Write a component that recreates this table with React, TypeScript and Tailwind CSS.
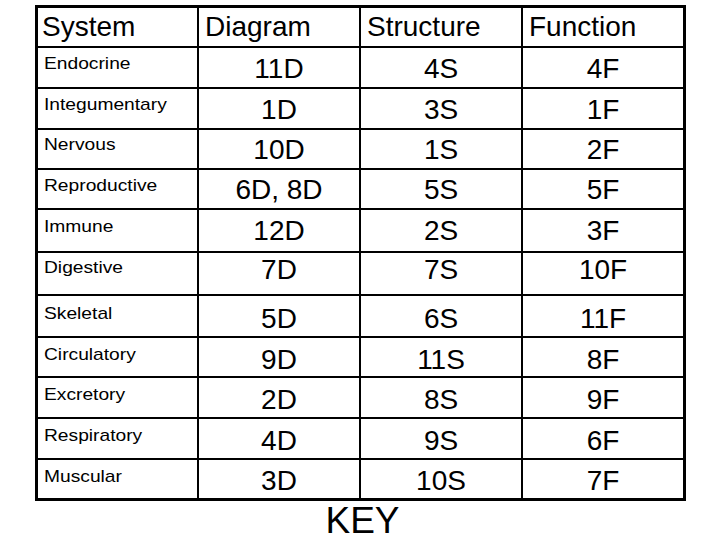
import React from "react";

const rows: { name: string; d: string; s: string; f: string; pt: string; lpt: string }[] = [
  { name: "Endocrine", d: "11D", s: "4S", f: "4F", pt: "pt-[7px]", lpt: "pt-[7px]" },
  { name: "Integumentary", d: "1D", s: "3S", f: "1F", pt: "pt-[7px]", lpt: "pt-[7px]" },
  { name: "Nervous", d: "10D", s: "1S", f: "2F", pt: "pt-[6px]", lpt: "pt-[6px]" },
  { name: "Reproductive", d: "6D, 8D", s: "5S", f: "5F", pt: "pt-[6px]", lpt: "pt-[7px]" },
  { name: "Immune", d: "12D", s: "2S", f: "3F", pt: "pt-[7px]", lpt: "pt-[8px]" },
  { name: "Digestive", d: "7D", s: "7S", f: "10F", pt: "pt-[3px]", lpt: "pt-[6px]" },
  { name: "Skeletal", d: "5D", s: "6S", f: "11F", pt: "pt-[9px]", lpt: "pt-[9px]" },
  { name: "Circulatory", d: "9D", s: "11S", f: "8F", pt: "pt-[8px]", lpt: "pt-[8px]" },
  { name: "Excretory", d: "2D", s: "8S", f: "9F", pt: "pt-[8px]", lpt: "pt-[8px]" },
  { name: "Respiratory", d: "4D", s: "9S", f: "6F", pt: "pt-[8px]", lpt: "pt-[8px]" },
  { name: "Muscular", d: "3D", s: "10S", f: "7F", pt: "pt-[7px]", lpt: "pt-[8px]" },
];

function Val({ v, pt }: { v: string; pt: string }) {
  return (
    <div className={`bg-white text-center text-[28px] leading-[28px] ${pt}`}>{v}</div>
  );
}

export default function App() {
  return (
    <div
      className="w-[720px] h-[540px] bg-white text-black overflow-hidden"
      style={{ fontFamily: '"Liberation Sans", Arial, sans-serif' }}
    >
      <div className="ml-[35px] mt-[5px] w-[651px] border-[3px] border-black bg-black grid grid-cols-[159px_160px_160px_160px] grid-rows-[38px_39px_39px_38px_38px_41px_41px_40px_38px_39px_39px_38px] gap-[2px]">
        <div className="bg-white text-[28px] leading-[28px] pt-[5px] pl-[4px]">System</div>
        <div className="bg-white text-[28px] leading-[28px] pt-[5px] pl-[6px]">Diagram</div>
        <div className="bg-white text-[28px] leading-[28px] pt-[5px] pl-[6px]">Structure</div>
        <div className="bg-white text-[28px] leading-[28px] pt-[5px] pl-[6px]">Function</div>
        {rows.map((r) => (
          <React.Fragment key={r.name}>
            <div className={`bg-white text-[17px] leading-[17px] pl-[6px] ${r.lpt}`}>
              <span className="inline-block origin-left [transform:scaleX(1.13)]">{r.name}</span>
            </div>
            <Val v={r.d} pt={r.pt} />
            <Val v={r.s} pt={r.pt} />
            <Val v={r.f} pt={r.pt} />
          </React.Fragment>
        ))}
      </div>
      <div className="mt-[1px] pl-[5px] text-center text-[37px] leading-[37px]">KEY</div>
    </div>
  );
}
